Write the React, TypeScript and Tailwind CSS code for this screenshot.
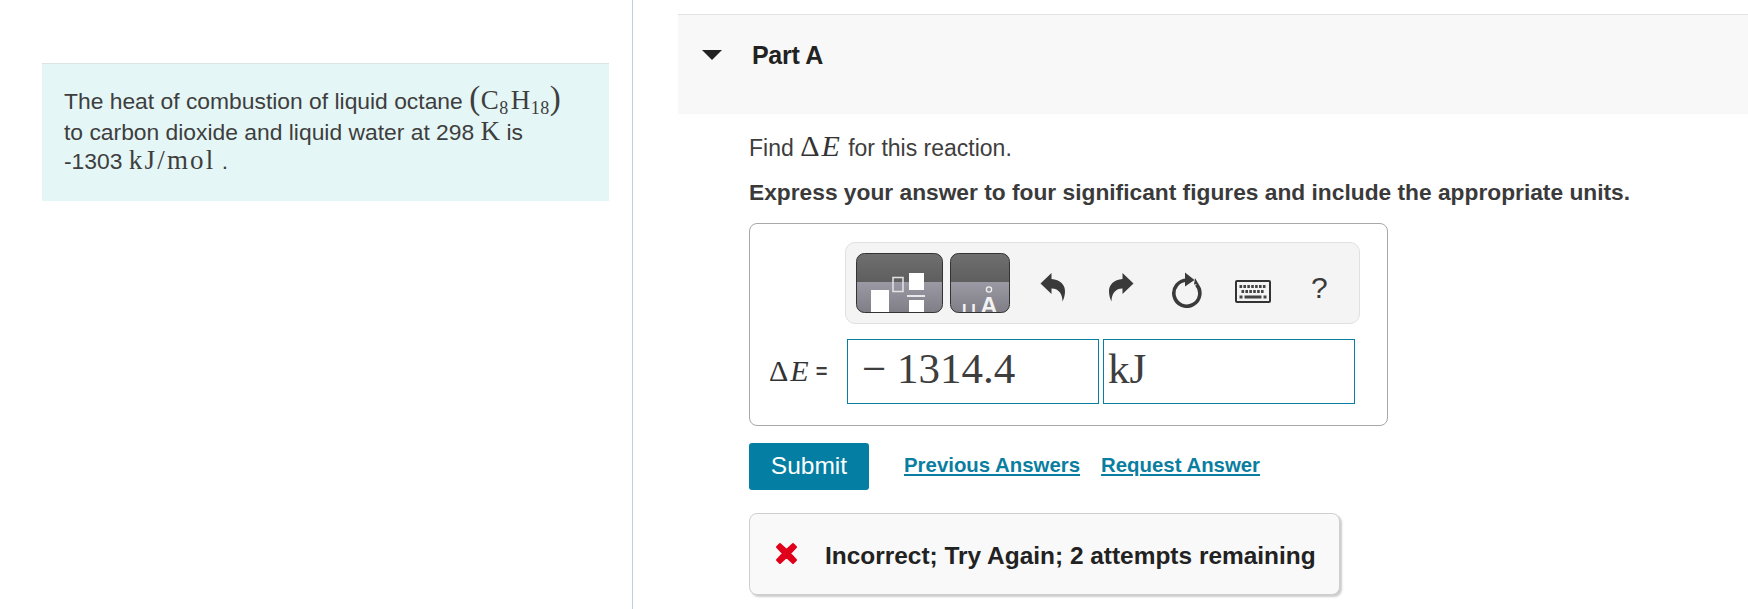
const sans = "font-['Liberation_Sans',Arial,sans-serif]";
const serif = "font-['Liberation_Serif','Times_New_Roman',serif]";

const FractionButton = () => (
  <svg width="87" height="60" viewBox="0 0 87 60" className="block">
    <defs>
      <linearGradient id="fracTop" x1="0" y1="0" x2="0" y2="1">
        <stop offset="0" stopColor="#707070" />
        <stop offset="1" stopColor="#5e5e5e" />
      </linearGradient>
      <linearGradient id="fracBottom" x1="0" y1="0" x2="0" y2="1">
        <stop offset="0" stopColor="#9b99a3" />
        <stop offset="1" stopColor="#7f7d86" />
      </linearGradient>
      <clipPath id="fracClip">
        <rect x="0.5" y="0.5" width="86" height="59" rx="8" />
      </clipPath>
    </defs>
    <g clipPath="url(#fracClip)">
      <rect width="87" height="29" fill="url(#fracTop)" />
      <rect y="29" width="87" height="31" fill="url(#fracBottom)" />
      <rect x="15" y="37" width="18" height="23" fill="#fff" />
      <rect x="37" y="24.5" width="10" height="14" fill="none" stroke="#e4e4e8" strokeWidth="1.5" />
      <rect x="53" y="20" width="15" height="17" fill="#fff" />
      <rect x="51" y="42" width="18" height="2" fill="#e8e8ec" />
      <rect x="53" y="47" width="15" height="13" fill="#fff" />
    </g>
    <rect x="0.5" y="0.5" width="86" height="59" rx="8" fill="none" stroke="#333" />
  </svg>
);

const UnitsButton = () => (
  <svg width="60" height="60" viewBox="0 0 60 60" className="block">
    <defs>
      <linearGradient id="unitTop" x1="0" y1="0" x2="0" y2="1">
        <stop offset="0" stopColor="#707070" />
        <stop offset="1" stopColor="#5e5e5e" />
      </linearGradient>
      <linearGradient id="unitBottom" x1="0" y1="0" x2="0" y2="1">
        <stop offset="0" stopColor="#9b99a3" />
        <stop offset="1" stopColor="#7f7d86" />
      </linearGradient>
      <clipPath id="unitClip">
        <rect x="0.5" y="0.5" width="59" height="59" rx="8" />
      </clipPath>
    </defs>
    <g clipPath="url(#unitClip)">
      <rect width="60" height="29" fill="url(#unitTop)" />
      <rect y="29" width="60" height="31" fill="url(#unitBottom)" />
      <circle cx="39" cy="36.5" r="2.6" fill="none" stroke="#f0f0f0" strokeWidth="1.3" />
      <text x="39" y="61" textAnchor="middle" fontFamily="Liberation Sans" fontWeight="700" fontSize="24" fill="#f2f2f2">A</text>
      <text x="19" y="66" textAnchor="middle" fontFamily="Liberation Sans" fontSize="27" fill="#f2f2f2">μ</text>
    </g>
    <rect x="0.5" y="0.5" width="59" height="59" rx="8" fill="none" stroke="#333" />
  </svg>
);

const UndoIcon = ({ flip = false }: { flip?: boolean }) => (
  <svg width="26" height="30" viewBox="0 0 26 30" className={flip ? "-scale-x-100" : ""}>
    <path
      d="M0.5 11.5 L11.5 1 V7 C20 7.5 25.5 13 25 20 C24.8 23.5 24 26.5 22.5 29.5 C22.5 23 19.5 16.5 11.5 16.5 V22 Z"
      fill="#3a3a3a"
    />
  </svg>
);

const RefreshIcon = () => (
  <svg width="32" height="36" viewBox="0 0 32 36">
    <path d="M17 8.2 A13 13 0 1 0 26.5 12.5" fill="none" stroke="#3a3a3a" strokeWidth="3.6" />
    <path d="M15 0.5 L24.5 8 L15 14.5 Z" fill="#3a3a3a" />
    <path d="M25 6 L28.5 12 L24 12.5 Z" fill="#3a3a3a" />
  </svg>
);

const KeyboardIcon = () => {
  const keys = [0, 1, 2, 3, 4, 5, 6];
  return (
    <svg width="36" height="24" viewBox="0 0 36 24">
      <rect x="1" y="1" width="34" height="21" rx="1" fill="#f4f4f4" stroke="#333" strokeWidth="2" />
      {keys.map((k) => (
        <rect key={k} x={4.5 + k * 3.9} y="5" width="2.6" height="3" fill="#444" />
      ))}
      {keys.slice(0, 6).map((k) => (
        <rect key={k} x={6.5 + k * 3.9} y="10" width="2.6" height="3" fill="#444" />
      ))}
      <rect x="4.5" y="15.5" width="3" height="3" fill="#444" />
      <rect x="9.5" y="15.5" width="17" height="3" fill="#444" />
      <rect x="28.5" y="15.5" width="3" height="3" fill="#444" />
    </svg>
  );
};

const Delta = () => (
  <span className={`${serif} text-[30px] leading-none tracking-[2px] text-[#333]`}>
    Δ<i>E</i>
  </span>
);

const App = () => {
  return (
    <div className={`${sans} flex h-[609px] w-full overflow-hidden bg-white text-[#3e3e3e]`}>
      <aside className="w-[633px] shrink-0 border-r border-[#c4ccd8] pl-[42px] pr-[23px] pt-[63px]">
        <div className="h-[138px] border-t border-[#dce3e3] bg-[#e5f6f6] pl-[22px] pr-4 pt-[23px] text-[22.85px] leading-[29px]">
          <p className="h-[31px]">
            The heat of combustion of liquid octane{" "}
            <span className={`${serif} text-[27px] leading-[0] tracking-[0.5px]`}>
              <span className="text-[33px] leading-[0]">(</span>C<sub className="text-[18px] leading-[0]">8</sub>
              <span className="ml-[2px]">H</span>
              <sub className="text-[18px] leading-[0]">18</sub>
              <span className="text-[33px] leading-[0]">)</span>
            </span>
          </p>
          <p className="h-[29px]">
            to carbon dioxide and liquid water at 298 <span className={`${serif} text-[27px] leading-[0]`}>K</span> is
          </p>
          <p className="h-[29px]">
            -1303 <span className={`${serif} text-[27px] leading-[0] tracking-[2.2px]`}>kJ/mol</span> .
          </p>
        </div>
      </aside>

      <main className="min-w-0 flex-1 pl-[45px] pt-[14px]">
        <header className="flex h-[100px] items-start border-t border-[#e2e2e2] bg-[#f8f8f8] pl-[24px] pt-[26px]">
          <span className="mt-[9px] h-0 w-0 border-x-[10px] border-t-[10px] border-x-transparent border-t-[#222]" />
          <h2 className="ml-[30px] text-[25px] font-bold leading-[28px] tracking-[-0.3px] text-[#222]">Part A</h2>
        </header>

        <div className="pl-[71px]">
          <p className="mt-[17px] h-[28px] text-[23px] leading-[28px]">
            Find <Delta /> for this reaction.
          </p>
          <p className="mt-[19px] text-[22.75px] font-bold leading-[28px] text-[#3a3a3a]">
            Express your answer to four significant figures and include the appropriate units.
          </p>

          <section className="mt-[17px] h-[203px] w-[639px] rounded-[8px] border border-[#a8a8a8] pl-[19px] pt-[18px]">
            <div className="ml-[76px] flex h-[82px] w-[515px] items-center rounded-[10px] border border-[#e0e0e0] bg-[#f4f4f4] pl-[10px]">
              <FractionButton />
              <div className="ml-[7px]">
                <UnitsButton />
              </div>
              <div className="ml-[30px] mt-[7px]">
                <UndoIcon />
              </div>
              <div className="ml-[42px] mt-[7px]">
                <UndoIcon flip />
              </div>
              <div className="ml-[36px] mt-[14px]">
                <RefreshIcon />
              </div>
              <div className="ml-[33px] mt-[18px]">
                <KeyboardIcon />
              </div>
              <span className="ml-[40px] mt-[10px] text-[30px] leading-none text-[#3a3a3a]">?</span>
            </div>

            <div className="mt-[15px] flex items-center">
              <span className="-mt-[2px] flex w-[78px] items-center text-[22px]">
                <Delta /> <span className="ml-[5px] text-[20px] font-bold">=</span>
              </span>
              <div className="h-[65px] w-[252px] border border-[#0a7ea0] pl-[14px] text-[43px] leading-[57px]">
                <span className={serif}>− 1314.4</span>
              </div>
              <div className="ml-[4px] h-[65px] w-[252px] border border-[#0a7ea0] pl-[4px] text-[43px] leading-[57px]">
                <span className={serif}>kJ</span>
              </div>
            </div>
          </section>

          <div className="mt-[17px] flex items-start">
            <button className="h-[47px] w-[120px] rounded-[3px] bg-[#047fa3] text-[24.5px] text-white">Submit</button>
            <a className="ml-[35px] mt-[7px] text-[20.4px] font-bold text-[#0a7ea0] underline underline-offset-2">
              Previous Answers
            </a>
            <a className="ml-[21px] mt-[7px] text-[20.4px] font-bold text-[#0a7ea0] underline underline-offset-2">
              Request Answer
            </a>
          </div>

          <div className="mt-[23px] flex h-[82px] w-[591px] items-center rounded-[8px] border border-[#cfcfcf] bg-[#f9f9f9] pl-[24px] shadow-[2px_2px_2px_rgba(0,0,0,0.2)]">
            <svg width="25" height="25" viewBox="0 0 25 25" className="-mt-[1px]">
              <path d="M3 6 L6 3 L12.5 9 L19 3 L22 6 L16 12.5 L22 19 L19 22 L12.5 16 L6 22 L3 19 L9 12.5 Z" fill="#e0001b" stroke="#e0001b" strokeWidth="2" strokeLinejoin="round" />
            </svg>
            <span className="ml-[26px] mt-[5px] text-[24.45px] font-bold text-[#222]">Incorrect; Try Again; 2 attempts remaining</span>
          </div>
        </div>
      </main>
    </div>
  );
};

export default App;
